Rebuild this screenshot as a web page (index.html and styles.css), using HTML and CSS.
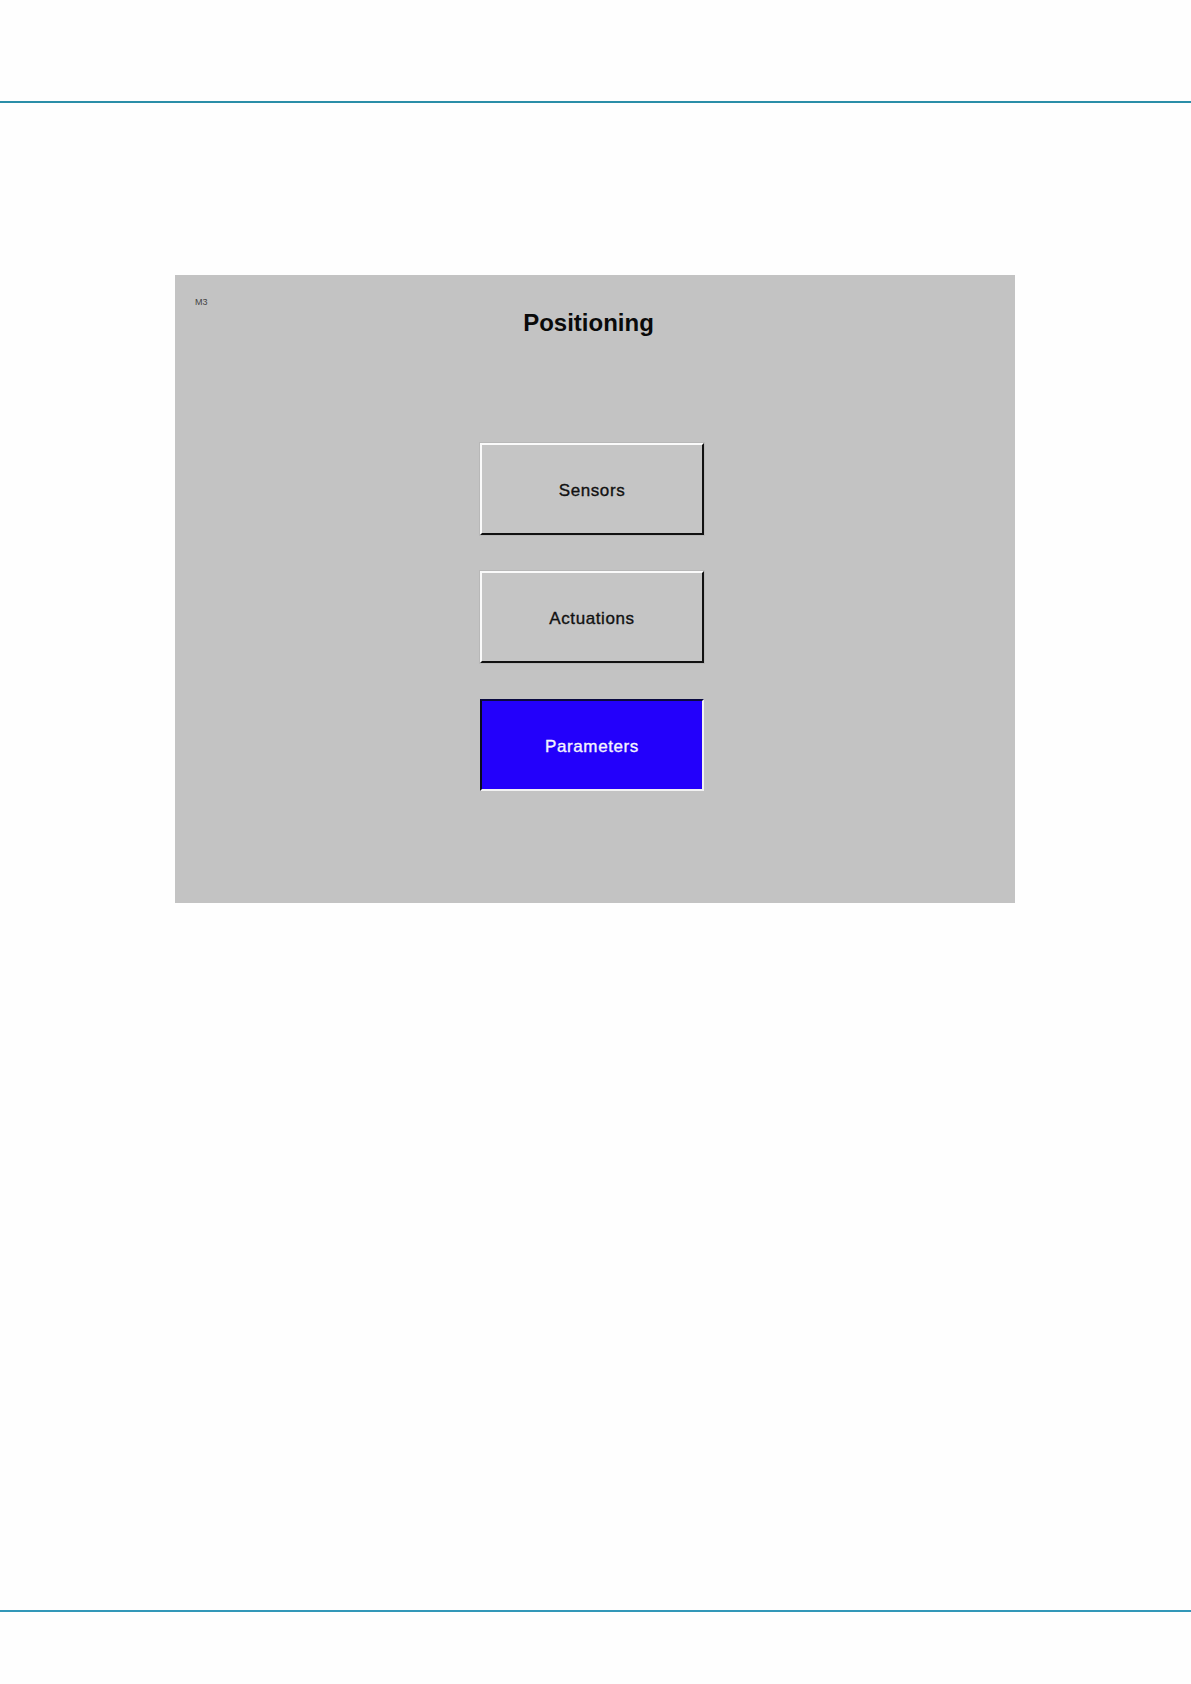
FILE: index.html
```html
<!DOCTYPE html>
<html>
<head>
<meta charset="utf-8">
<link rel="stylesheet" href="styles.css">
</head>
<body>
<div class="page">
  <div class="top-rule"></div>
  <div class="panel">
    <div class="tag">M3</div>
    <div class="title">Positioning</div>
    <div class="menu">
      <div class="btn">Sensors</div>
      <div class="btn">Actuations</div>
      <div class="btn btn-active">Parameters</div>
    </div>
  </div>
  <div class="bottom-rule"></div>
</div>
</body>
</html>
```

FILE: styles.css
```css
html, body {
  margin: 0;
  padding: 0;
  background: #fefefe;
}
.page {
  width: 1191px;
  height: 1684px;
  padding-top: 101px;
  box-sizing: border-box;
  font-family: "Liberation Sans", Arial, sans-serif;
}
.top-rule {
  height: 2px;
  background: #2a8ea8;
}
.panel {
  margin-top: 172px;
  margin-left: 175px;
  width: 840px;
  height: 628px;
  background: #c3c3c3;
  padding-top: 22px;
  box-sizing: border-box;
  display: flex;
  flex-direction: column;
}
.tag {
  margin-left: 20px;
  font-size: 9px;
  line-height: 10px;
  height: 10px;
  color: #444;
}
.title {
  margin-top: 2px;
  height: 28px;
  line-height: 28px;
  font-size: 24px;
  font-weight: bold;
  color: #0a0a0a;
  text-align: center;
  padding-right: 13px;
}
.menu {
  margin-top: 106px;
  margin-left: 305px;
  display: flex;
  flex-direction: column;
  gap: 36px;
}
.btn {
  width: 224px;
  height: 92px;
  box-sizing: border-box;
  padding-top: 4px;
  background: #c5c5c5;
  border-top: 2px solid #fafafa;
  border-left: 2px solid #fafafa;
  border-bottom: 2px solid #111;
  border-right: 2px solid #111;
  outline: 1px solid #b8b8b8;
  display: flex;
  align-items: center;
  justify-content: center;
  font-size: 17px;
  letter-spacing: 0.6px;
  -webkit-text-stroke: 0.35px currentColor;
  color: #111;
}
.btn-active {
  background: #2300fb;
  color: #f4f4ff;
  border-top: 2px solid #0a0a40;
  border-left: 2px solid #0a0a20;
  border-bottom: 2px solid #f2f2f2;
  border-right: 2px solid #f2f2f2;
  outline: none;
}
.bottom-rule {
  margin-top: 707px;
  height: 2px;
  background: #3297b8;
}
```
